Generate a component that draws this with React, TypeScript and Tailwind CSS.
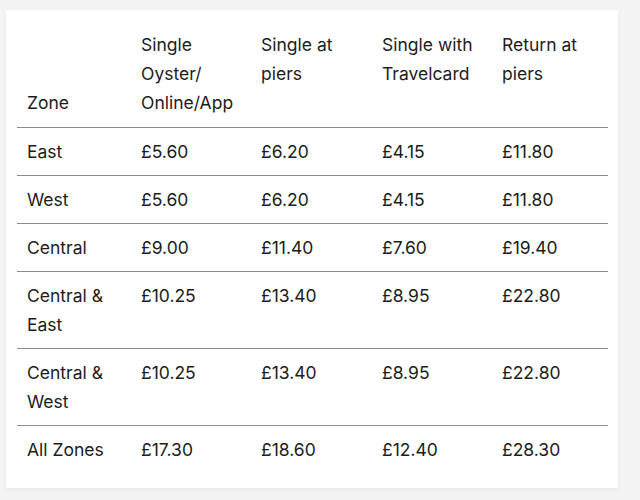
// Tarifs bateau par zone : un tableau simple dans une carte blanche.

const headers = ["Zone", "Single Oyster/ Online/App", "Single at piers", "Single with Travelcard", "Return at piers"];

const rows: [string, string, string, string, string][] = [
  ["East", "£5.60", "£6.20", "£4.15", "£11.80"],
  ["West", "£5.60", "£6.20", "£4.15", "£11.80"],
  ["Central", "£9.00", "£11.40", "£7.60", "£19.40"],
  ["Central & East", "£10.25", "£13.40", "£8.95", "£22.80"],
  ["Central & West", "£10.25", "£13.40", "£8.95", "£22.80"],
  ["All Zones", "£17.30", "£18.60", "£12.40", "£28.30"],
];

// Largeurs relevées sur la capture (colonnes de 114 à 121 px)
const widths = ["w-[114px]", "w-[120px]", "w-[121px]", "w-[120px]", "w-[116px]"];

export default function App() {
  return (
    <div className="min-h-[500px] w-[640px] bg-[#f3f3f3] pt-[10px] pl-[6px]">
      <div
        className="w-[612px] h-[478px] bg-white pt-[10px] pl-[11px] shadow-[0_1px_4px_rgba(0,0,0,0.06)]"
        style={{ fontFamily: "Inter, 'Liberation Sans', sans-serif" }}
      >
        <table className="w-[591px] table-fixed border-collapse text-[17.5px] leading-[29px] text-[#1c1c1c]">
          <colgroup>
            {widths.map((w) => (
              <col key={w} className={w} />
            ))}
          </colgroup>
          <thead>
            <tr className="border-b border-[#8c8c8c]">
              {headers.map((h, j) => (
                // « Zone » tombe en bas de l'en-tête, les autres restent en haut
                <th
                  key={h}
                  className={`px-[10px] pt-[10px] pb-[10px] text-left font-normal ${j === 0 ? "align-bottom" : "align-top"}`}
                >
                  {h}
                </th>
              ))}
            </tr>
          </thead>
          <tbody>
            {rows.map((r, i) => (
              <tr key={i} className={i < rows.length - 1 ? "border-b border-[#8c8c8c]" : ""}>
                {r.map((c, j) => (
                  <td key={j} className="px-[10px] pt-[9px] pb-[9px] align-top">
                    {c}
                  </td>
                ))}
              </tr>
            ))}
          </tbody>
        </table>
      </div>
    </div>
  );
}
